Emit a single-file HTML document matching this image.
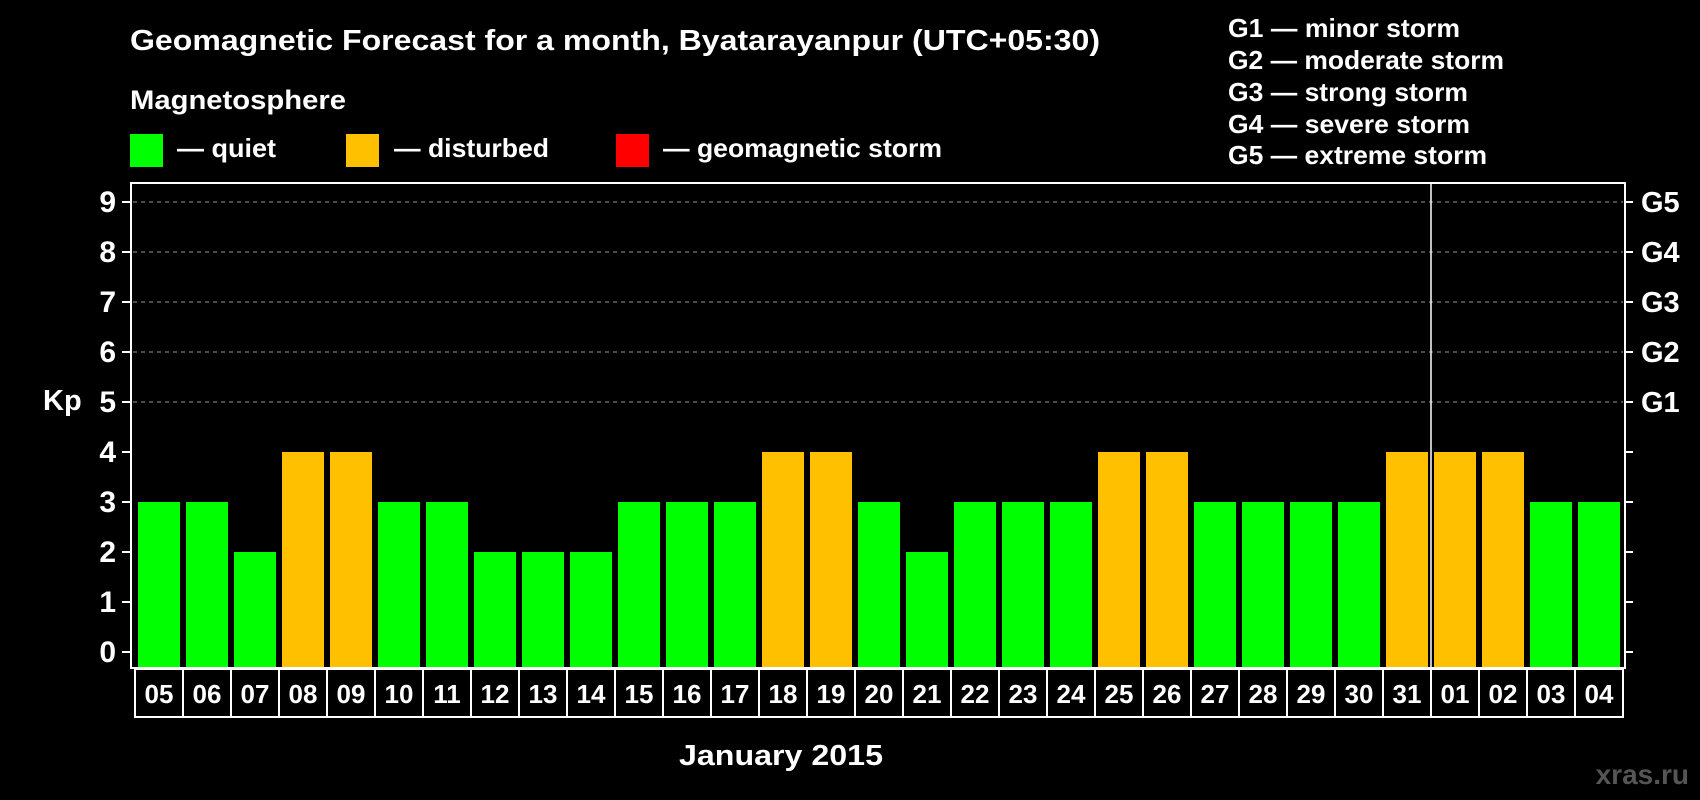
<!DOCTYPE html>
<html><head><meta charset="utf-8"><style>
html,body{margin:0;padding:0;background:#000;width:1700px;height:800px;overflow:hidden}
svg{display:block}
text{font-family:"Liberation Sans",Arial,sans-serif;font-weight:bold;fill:#fff}
</style></head><body>
<svg width="1700" height="800" viewBox="0 0 1700 800" xmlns="http://www.w3.org/2000/svg">
<rect width="1700" height="800" fill="#000"/>
<text x="130" y="50" font-size="29" textLength="970" lengthAdjust="spacingAndGlyphs">Geomagnetic Forecast for a month, Byatarayanpur (UTC+05:30)</text>
<text x="130" y="109" font-size="27" textLength="216" lengthAdjust="spacingAndGlyphs">Magnetosphere</text>
<rect x="130" y="134" width="33" height="33" fill="#00ff00"/>
<text x="177" y="157" font-size="26" textLength="99" lengthAdjust="spacingAndGlyphs">— quiet</text>
<rect x="346" y="134" width="33" height="33" fill="#ffc000"/>
<text x="394" y="157" font-size="26" textLength="155" lengthAdjust="spacingAndGlyphs">— disturbed</text>
<rect x="616" y="134" width="33" height="33" fill="#ff0000"/>
<text x="663" y="157" font-size="26" textLength="279" lengthAdjust="spacingAndGlyphs">— geomagnetic storm</text>
<g font-size="26">
<text x="1228" y="37" textLength="232" lengthAdjust="spacingAndGlyphs">G1 — minor storm</text>
<text x="1228" y="69" textLength="276" lengthAdjust="spacingAndGlyphs">G2 — moderate storm</text>
<text x="1228" y="101" textLength="240" lengthAdjust="spacingAndGlyphs">G3 — strong storm</text>
<text x="1228" y="133" textLength="242" lengthAdjust="spacingAndGlyphs">G4 — severe storm</text>
<text x="1228" y="164" textLength="259" lengthAdjust="spacingAndGlyphs">G5 — extreme storm</text>
</g>
<g stroke="#999" stroke-width="1" stroke-dasharray="4,4">
<line x1="133" y1="202" x2="1623" y2="202"/>
<line x1="133" y1="252" x2="1623" y2="252"/>
<line x1="133" y1="302" x2="1623" y2="302"/>
<line x1="133" y1="352" x2="1623" y2="352"/>
<line x1="133" y1="402" x2="1623" y2="402"/>
</g>
<g id="bars"></g>
<rect x="131" y="183" width="1494" height="485" fill="none" stroke="#fff" stroke-width="2"/>
<line x1="1431" y1="183" x2="1431" y2="668" stroke="#fff" stroke-width="1.5"/>
<g stroke="#fff" stroke-width="2" id="ticks"></g>
<g font-size="30" text-anchor="end" id="ylab"></g>
<g font-size="29" id="glab">
<text x="1641" y="212">G5</text>
<text x="1641" y="262">G4</text>
<text x="1641" y="312">G3</text>
<text x="1641" y="362">G2</text>
<text x="1641" y="412">G1</text>
</g>
<text x="43" y="410" font-size="29">Kp</text>
<rect x="135" y="669" width="1488" height="48" fill="none" stroke="#fff" stroke-width="2"/>
<g id="dates" font-size="26" text-anchor="middle"></g>
<text x="781" y="765" font-size="29" text-anchor="middle" textLength="204" lengthAdjust="spacingAndGlyphs">January 2015</text>
<text x="1689" y="784" font-size="28" text-anchor="end" style="fill:#555">xras.ru</text>
<script>
var vals=[3,3,2,4,4,3,3,2,2,2,3,3,3,4,4,3,2,3,3,3,4,4,3,3,3,3,4,4,4,3,3];
var dd=["05","06","07","08","09","10","11","12","13","14","15","16","17","18","19","20","21","22","23","24","25","26","27","28","29","30","31","01","02","03","04"];
var ns="http://www.w3.org/2000/svg";
function el(t,a,p,txt){var e=document.createElementNS(ns,t);for(var k in a)e.setAttribute(k,a[k]);if(txt)e.textContent=txt;document.getElementById(p).appendChild(e);}
for(var i=0;i<31;i++){
 var bx=138+i*48,by=652-50*vals[i];
 el("rect",{x:bx,y:by,width:42,height:668-by,fill:vals[i]>=4?"#ffc000":"#00ff00"},"bars");
 el("text",{x:159+i*48,y:703},"dates",dd[i]);
 if(i>0)el("line",{x1:135+i*48,y1:669,x2:135+i*48,y2:717,stroke:"#fff","stroke-width":2},"bars");
}
for(var k=0;k<=9;k++){
 var yy=652-50*k;
 el("line",{x1:122,y1:yy,x2:131,y2:yy},"ticks");
 el("line",{x1:1625,y1:yy,x2:1633,y2:yy},"ticks");
 el("text",{x:116,y:yy+10},"ylab",""+k);
}
</script>
</svg>
</body></html>
